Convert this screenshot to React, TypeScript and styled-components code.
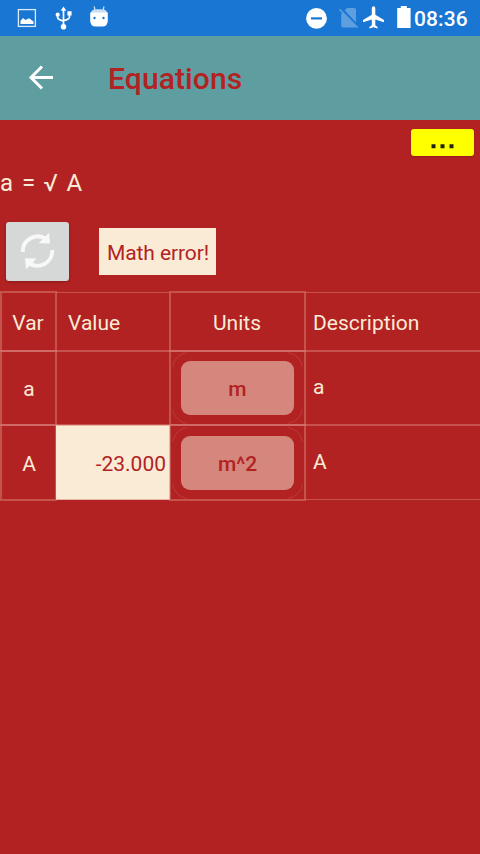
import React from "react";
import styled, { createGlobalStyle } from "styled-components";

const red = "#b22222";
const cream = "#faebd7";
const line = "rgba(218, 130, 122, 0.5)";

const GlobalStyle = createGlobalStyle`
  * { box-sizing: border-box; }
  body { margin: 0; background: ${red}; font-family: Roboto, sans-serif; overflow: hidden; }
  svg { display: block; }
`;

const Screen = styled.div`
  width: 480px;
  height: 854px;
  background: ${red};
  color: ${cream};
  overflow: hidden;
`;

const StatusBar = styled.header`
  height: 36px;
  background: #1976d2;
  display: flex;
  justify-content: space-between;
  color: #fff;
`;

const StatusEnd = styled.div`
  display: flex;
`;

const Clock = styled.span`
  font-size: 21px;
  font-weight: 500;
  line-height: 38px;
  width: 66px;
  letter-spacing: 0.1px;
  white-space: nowrap;
`;

const AppBar = styled.div`
  height: 84px;
  background: #5f9ea0;
  display: flex;
  align-items: center;
`;

const BackButton = styled.button`
  width: 108px;
  height: 84px;
  padding: 0;
  border: 0;
  background: none;
`;

const Title = styled.h1`
  margin: 2px 0 0;
  color: ${red};
  font-size: 30px;
  line-height: 36px;
  font-weight: 500;
  letter-spacing: 0.12px;
`;

const MenuRow = styled.div`
  height: 45px;
  padding: 9px 6px 0;
  display: flex;
  justify-content: flex-end;
`;

const MoreButton = styled.button`
  width: 63px;
  height: 27px;
  border: 0;
  border-radius: 3px;
  background: #ff0;
  box-shadow: 0 1px 2px rgba(0, 0, 0, 0.18);
  padding: 15px 1px 0 0;
  display: flex;
  justify-content: center;
`;

const Formula = styled.div`
  height: 57px;
  font-size: 24px;
  line-height: 36px;
  white-space: pre;
  word-spacing: 3px;
`;

const Radical = styled.span`
  margin-left: -1px;
`;

const ActionRow = styled.div`
  height: 70px;
  padding-left: 6px;
  display: flex;
  gap: 30px;
`;

const RefreshButton = styled.button`
  width: 63px;
  height: 59px;
  padding: 0;
  border: 0;
  border-radius: 3px;
  background: #d6d7d7;
  box-shadow: 0 1px 3px rgba(0, 0, 0, 0.25);
`;

const Message = styled.div`
  width: 117px;
  height: 47px;
  margin-top: 6px;
  background: ${cream};
  color: ${red};
  font-size: 21px;
  line-height: 50px;
  letter-spacing: -0.1px;
  padding-left: 8px;
  white-space: nowrap;
`;

const Table = styled.div`
  display: grid;
  grid-template-columns: 55px 114px 135px 175px;
  grid-template-rows: 59px 74px 75px;
  padding-left: 1px;
  font-size: 21px;
  line-height: 24px;
`;

const Cell = styled.div<{ $framed?: boolean; $filled?: boolean; $align?: string; $drop?: number }>`
  display: flex;
  align-items: center;
  justify-content: ${(p) => p.$align ?? "center"};
  padding: ${(p) => p.$drop ?? 3}px ${(p) => (p.$filled ? 4 : 8)}px 0 7px;
  border: 1px solid ${line};
  border-right-width: ${(p) => (p.$framed ? 1 : 0)}px;
  border-left-width: ${(p) => (p.$framed ? 1 : 0)}px;
  background: ${(p) => (p.$filled ? cream : "none")};
  color: ${(p) => (p.$filled ? red : cream)};
  box-shadow: ${(p) => (p.$framed ? `0 0 0 1px ${line}` : "none")};
`;

const HeadValue = styled(Cell)`
  padding-left: 12px;
`;

const Variable = styled(Cell)`
  padding-left: 8px;
  padding-right: 7px;
`;

const Description = styled(Cell)`
  padding-left: 8px;
  align-items: flex-start;
`;

const UnitCell = styled(Cell)`
  padding: 0;
`;

const UnitRing = styled.div`
  position: relative;
  width: 131px;
  height: 72px;
  display: grid;
  place-items: center;
  flex: none;

  &::before {
    content: "";
    position: absolute;
    inset: 0;
    border-radius: 17px;
    border: 1px solid rgba(218, 130, 122, 0.3);
    --corner: linear-gradient(#000, #000);
    mask: var(--corner) 0 0 / 15px 15px no-repeat, var(--corner) 100% 0 / 15px 15px no-repeat,
      var(--corner) 0 100% / 15px 15px no-repeat, var(--corner) 100% 100% / 15px 15px no-repeat;
  }
`;

const UnitButton = styled.button`
  width: 113px;
  height: 54px;
  border: 0;
  border-radius: 9px;
  padding: 2px 0 0;
  background: #d6877d;
  color: ${red};
  font: 500 21px/24px Roboto, sans-serif;
`;

function StatusIcons() {
  return (
    <svg width="120" height="36" viewBox="0 0 120 36" fill="none">
      <rect x="18.4" y="9.6" width="17" height="16.8" stroke="#dceafa" strokeWidth="1.3" />
      <path d="M20.5 24v-3.2l2.5-2.7 2.5 2 3.5-1.8 4.5 3.2V24z" fill="#fff" />
      <path d="M63.5 9v17M57.6 15v2.3q0 2.4 5.9 3.8M69.5 14v2.7q0 2.7-6 4" stroke="#fff" strokeWidth="1.7" />
      <path d="m63.5 6.5 2.8 4.3h-5.6zM67.4 11.3h4.2v4.2h-4.2z" fill="#fff" />
      <circle cx="57.7" cy="14.7" r="2.1" fill="#fff" />
      <circle cx="63.5" cy="26.8" r="2.8" fill="#fff" />
      <path d="m94.2 6.3.9 4M104 6.3l-.9 4" stroke="#cfe2f6" strokeWidth="1.2" />
      <path d="M90.8 13Q91.4 9.3 96 9.2h6.2q4.4.1 5.2 3.8z" fill="#c7ddf4" />
      <path d="M90.2 12.4h17.6V21q-.4 5.5-5.4 5.5h-6.8q-5 0-5.4-5.5z" fill="#fff" />
      <circle cx="94.5" cy="18" r="1.2" fill="#1976d2" />
      <circle cx="103.5" cy="18" r="1.2" fill="#1976d2" />
    </svg>
  );
}

function SystemIcons() {
  return (
    <svg width="114" height="36" viewBox="300 0 114 36">
      <circle cx="316.5" cy="18.4" r="10.4" fill="#fff" />
      <path d="M311 17.3h11v2.2h-11z" fill="#1976d2" />
      <path d="M347 8h7q2 0 2 2v16q0 1.5-1.5 1.5H343q-1.8 0-1.8-1.8V14z" fill="#5e9fe0" />
      <path d="m340.5 8 18 19" stroke="#1976d2" strokeWidth="2.6" />
      <path d="m339.5 9.2 18 18.4" stroke="#5e9fe0" strokeWidth="1.6" />
      <path d="M384 22.2v-2.3l-8.7-5.2V8.4c0-2.9-3.5-2.9-3.5 0v6.3l-8.8 5.2v2.3l8.8-2.7v5.8l-2.4 1.6v1.6l4.1-1.2 4.1 1.2v-1.6l-2.3-1.6v-5.8z" fill="#fff" />
      <path d="M397.2 8h3.6V6h6v2h3.8v20h-13.4z" fill="#fff" />
    </svg>
  );
}

export default function App() {
  return (
    <Screen>
      <GlobalStyle />
      <StatusBar>
        <StatusIcons />
        <StatusEnd>
          <SystemIcons />
          <Clock>08:36</Clock>
        </StatusEnd>
      </StatusBar>
      <AppBar>
        <BackButton aria-label="Back">
          <svg width="108" height="84" viewBox="0 0 108 84" fill="none" stroke="#fff" strokeWidth="3">
            <path d="M53 41.5H31.5M42 30.5l-11 11 11 11" />
          </svg>
        </BackButton>
        <Title>Equations</Title>
      </AppBar>
      <MenuRow>
        <MoreButton aria-label="More">
          <svg width="23" height="5" fill="#222211">
            <path d="M.5.3h4v4h-4zM9.5.3h4v4h-4zM18.5.3h4v4h-4z" />
          </svg>
        </MoreButton>
      </MenuRow>
      <Formula>a = <Radical>√</Radical> A</Formula>
      <ActionRow>
        <RefreshButton aria-label="Recalculate">
          <svg width="63" height="59" viewBox="6 222 63 59" fill="none">
            <path d="M22.8 252A14.8 14.8 0 0 1 46.5 239.5M52.2 250A14.8 14.8 0 0 1 28.5 262.8" stroke="#f8f8f8" strokeWidth="4" />
            <path d="m49 232.7 1 10.8-11.3-.2zM25 258.3l11.5.2L26 269.5z" fill="#f8f8f8" />
          </svg>
        </RefreshButton>
        <Message>Math error!</Message>
      </ActionRow>
      <Table>
        <Cell $framed>Var</Cell>
        <HeadValue $align="flex-start">Value</HeadValue>
        <Cell $framed>Units</Cell>
        <Description $align="flex-start" $drop={18}>Description</Description>
        <Variable $framed $drop={2}>a</Variable>
        <Cell />
        <UnitCell $framed>
          <UnitRing><UnitButton>m</UnitButton></UnitRing>
        </UnitCell>
        <Description $align="flex-start" $drop={23}>a</Description>
        <Variable $framed>A</Variable>
        <Cell $filled $align="flex-end">-23.000</Cell>
        <UnitCell $framed>
          <UnitRing><UnitButton>m^2</UnitButton></UnitRing>
        </UnitCell>
        <Description $align="flex-start" $drop={24}>A</Description>
      </Table>
    </Screen>
  );
}
